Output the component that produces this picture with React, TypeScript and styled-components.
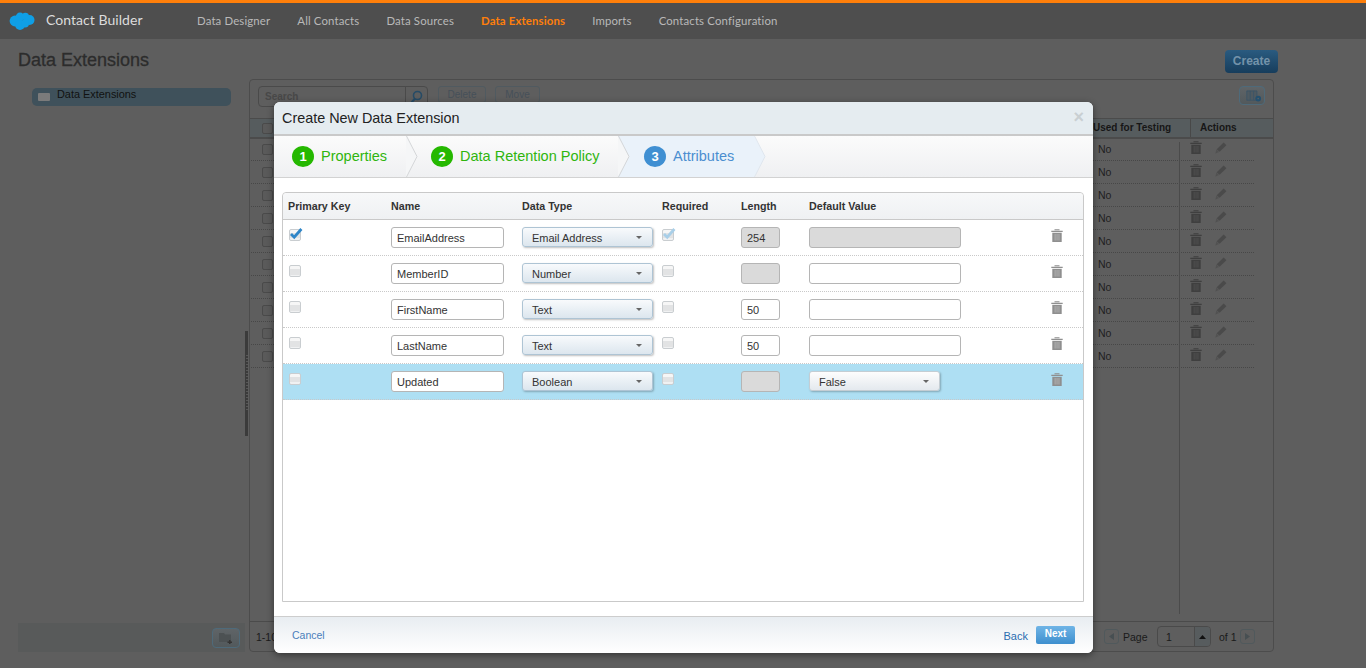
import React from "react";
import styled, { createGlobalStyle } from "styled-components";

const Global = createGlobalStyle`
  html, body { margin: 0; padding: 0; height: 100%; overflow: hidden; background: #5e5e5e; }
  body { font-family: "Liberation Sans", Arial, sans-serif; font-size: 11px; color: #222; }
  * { box-sizing: border-box; }
`;

const Page = styled.div`
  position: relative;
  width: 1366px;
  height: 668px;
  display: flex;
  flex-direction: column;
  background: #5e5e5e;
  overflow: hidden;
`;
const TopBar = styled.header`
  height: 39px;
  flex: none;
  border-top: 3px solid #ff7f0a;
  background: #4e4e4e;
  display: flex;
  align-items: center;
  padding-left: 9px;
`;
const Brand = styled.div`
  display: flex;
  align-items: center;
  gap: 11px;
  width: 188px;
  font: 400 14px Lato, sans-serif;
  letter-spacing: 0.05px;
  color: #dcdcdc;
  margin-top: -4px;
`;
const CloudSvg = styled.svg`
  margin-top: 4px;
  flex: none;
`;
const Nav = styled.nav`
  display: flex;
  gap: 27px;
  margin-top: -1px;
`;
const NavItem = styled.span<{ $on?: boolean }>`
  font: ${(p) => (p.$on ? 700 : 400)} 11.4px Lato, sans-serif;
  letter-spacing: 0.14px;
  color: ${(p) => (p.$on ? "#ff7f0a" : "#b9b9b9")};
`;
const Heading = styled.div`
  height: 40px;
  flex: none;
  display: flex;
  justify-content: space-between;
  align-items: center;
  padding: 0 88px 0 18px;
`;
const Title = styled.h1`
  margin: 2px 0 0;
  font-size: 18px;
  font-weight: 400;
  color: #2c2c2c;
  -webkit-text-stroke: 0.3px #2c2c2c;
`;
const CreateBtn = styled.div`
  width: 53px;
  height: 23px;
  margin-top: 4px;
  border-radius: 4px;
  background: linear-gradient(#2a5b80, #173d5c);
  color: #7493aa;
  font-size: 12px;
  font-weight: 700;
  line-height: 23px;
  text-align: center;
`;
const Body = styled.div`
  flex: 1;
  display: flex;
  padding: 0 92px 16px 18px;
`;
const Side = styled.aside`
  width: 227px;
  flex: none;
  display: flex;
  flex-direction: column;
  justify-content: space-between;
  padding-top: 9px;
`;
const TreeItem = styled.div`
  margin: 0 14px 0 14px;
  height: 18px;
  border-radius: 5px;
  background: #3f515b;
  display: flex;
  padding-left: 6px;
  gap: 7px;
  color: #111;
  font-size: 10.9px;
  line-height: 13px;
`;
const TreeIcon = styled.span`
  width: 12px;
  height: 8px;
  margin-top: 5px;
  background: #7b7b7b;
  border-radius: 1px;
`;
const SideFoot = styled.div`
  height: 29px;
  background: #585a5a;
  display: flex;
  justify-content: flex-end;
  align-items: center;
  padding-right: 5px;
`;
const IconBtn = styled.div`
  width: 28px;
  height: 20px;
  border-radius: 4px;
  border: 1px solid #4e6a7a;
  background: linear-gradient(#5f6467, #52595c);
  display: flex;
  align-items: center;
  justify-content: center;
`;
const Splitter = styled.div`
  position: relative;
  width: 3px;
  flex: none;
  margin: 252px 1px 0 0;
  height: 105px;
  background: #3b3b3b;
  &::after {
    content: "";
    position: absolute;
    left: 1px;
    top: 24px;
    width: 2px;
    height: 56px;
    background: repeating-linear-gradient(#585858 0 1px, transparent 1px 3px);
  }
`;
const Panel = styled.section`
  width: 1025px;
  flex: none;
  border: 1px solid #4c4c4c;
  border-radius: 4px;
  display: flex;
  flex-direction: column;
`;
const Tools = styled.div`
  height: 38px;
  flex: none;
  display: flex;
  align-items: flex-start;
  padding: 6px 8px 0 8px;
`;
const Search = styled.div`
  width: 148px;
  height: 21px;
  border: 1px solid #4a4a4a;
  border-radius: 4px 0 0 4px;
  color: #484848;
  font-size: 10px;
  line-height: 20px;
  padding-left: 6px;
  font-weight: 700;
`;
const SearchBtn = styled.div`
  width: 23px;
  height: 21px;
  margin-left: -1px;
  border: 1px solid #4a4a4a;
  border-radius: 0 4px 4px 0;
  display: flex;
  align-items: center;
  justify-content: center;
  margin-right: 10px;
`;
const ToolBtn = styled.div<{ $w: number }>`
  width: ${(p) => p.$w}px;
  height: 17px;
  margin-right: 9px;
  border: 1px solid #505a60;
  border-radius: 3px;
  color: #465059;
  font-size: 10px;
  line-height: 15px;
  text-align: center;
`;
const ColumnsBtn = styled(IconBtn)`
  margin-left: auto;
  width: 26px;
  height: 19px;
  padding-left: 3px;
`;
const GridHead = styled.div`
  height: 21px;
  flex: none;
  border-top: 1px solid #4b4b4b;
  border-bottom: 2px solid #4b4b4b;
  background: #565c5e;
  display: grid;
  grid-template-columns: 843px 97px 1fr;
  font-weight: 700;
  font-size: 10px;
  line-height: 18px;
  color: #161616;
`;
const HeadCheck = styled.span`
  padding: 4px 0 0 8px;
`;
const HeadCell = styled.span<{ $split?: boolean }>`
  padding-left: ${(p) => (p.$split ? 9 : 0)}px;
  border-left: ${(p) => (p.$split ? "1px solid #484848" : "none")};
`;
const GridBody = styled.div`
  flex: 1;
  position: relative;
  margin-top: -1px;
`;
const VLine = styled.div`
  position: absolute;
  left: 929px;
  top: 4px;
  bottom: 7px;
  width: 1px;
  background: #4b4b4b;
`;
const BgRow = styled.div`
  height: 23px;
  margin: 0 19px 0 1px;
  padding-left: 7px;
  border-bottom: 1px dotted #474747;
  display: grid;
  grid-template-columns: 840px 92px 25px 1fr;
  align-items: center;
  color: #1f1f1f;
  font-size: 10.5px;
`;
const BgCheck = styled.span`
  display: block;
  width: 11px;
  height: 11px;
  margin-left: 4px;
  border: 1px solid #4a4a4a;
  border-radius: 2px;
  background: #5a5a5a;
`;
const BgIcon = styled.span`
  display: block;
  line-height: 0;
  margin-top: -3px;
`;
const GridFoot = styled.div`
  height: 30px;
  flex: none;
  border-top: 1px solid #4b4b4b;
  display: flex;
  align-items: center;
  padding: 0 18px 0 6px;
  color: #1a1a1a;
  font-size: 10.5px;
`;
const Range = styled.span`
  margin-right: auto;
`;
const PagerBtn = styled.div`
  width: 15px;
  height: 15px;
  border: 1px solid #50595c;
  border-radius: 3px;
  display: flex;
  align-items: center;
  justify-content: center;
`;
const PageLabel = styled.span<{ $w: number; $pad: number }>`
  width: ${(p) => p.$w}px;
  padding-left: ${(p) => p.$pad}px;
`;
const PageInput = styled.div`
  width: 54px;
  height: 21px;
  border: 1px solid #4a4a4a;
  border-radius: 4px;
  display: flex;
  line-height: 20px;
  padding-left: 8px;
  margin-right: 8px;
  justify-content: space-between;
`;
const PageSpin = styled.span`
  width: 16px;
  border-left: 1px solid #4a4a4a;
  background: #575c5e;
  border-radius: 0 3px 3px 0;
  display: flex;
  align-items: center;
  justify-content: center;
`;
const Modal = styled.div`
  position: absolute;
  left: 274px;
  top: 102px;
  width: 819px;
  height: 551px;
  background: #fff;
  border-radius: 6px;
  box-shadow: 0 2px 7px rgba(0, 0, 0, 0.45);
  display: flex;
  flex-direction: column;
  overflow: hidden;
`;
const ModalHead = styled.div`
  height: 34px;
  flex: none;
  background: #e5ecf0;
  border-bottom: 2px solid #c9c9c9;
  display: flex;
  align-items: center;
  justify-content: space-between;
  padding: 0 9px 0 8px;
  font-size: 14.4px;
  color: #222;
`;
const Close = styled.span`
  font-size: 18px;
  font-weight: 700;
  color: #c9cfd2;
  margin-top: -2px;
`;
const Steps = styled.div`
  height: 42px;
  flex: none;
  display: flex;
  background: linear-gradient(#fbfbfb, #eff0f2);
  border-bottom: 1px solid #d2d2d2;
`;
const Step = styled.div<{ $w: number; $pad: number; $active?: boolean; $z: number }>`
  position: relative;
  z-index: ${(p) => p.$z};
  width: ${(p) => p.$w}px;
  flex: none;
  display: flex;
  align-items: center;
  gap: 7px;
  padding: 0 0 1px ${(p) => p.$pad}px;
  background: ${(p) => (p.$active ? "#eaf2fa" : "transparent")};
  color: ${(p) => (p.$active ? "#4a8ed0" : "#2fb50e")};
  font-size: 14.5px;
`;
const Badge = styled.span<{ $active?: boolean }>`
  width: 22px;
  height: 21px;
  border-radius: 50%;
  background: ${(p) => (p.$active ? "#3f8fd2" : "#25b800")};
  color: #fff;
  font-size: 13px;
  font-weight: 700;
  line-height: 21px;
  text-align: center;
`;
const Chevron = styled.svg`
  position: absolute;
  left: 100%;
  top: 0;
`;
const Content = styled.div`
  flex: 1;
  padding: 14px 9px 14px 8px;
`;
const Table = styled.div`
  height: 410px;
  border: 1px solid #c9c9c9;
  border-radius: 4px 4px 0 0;
`;
const cols = "108px 131px 140px 79px 68px 241px 1fr";
const TableHead = styled.div`
  height: 27px;
  background: linear-gradient(#f7f8f9, #eff1f3);
  border-bottom: 1px solid #c9c9c9;
  display: grid;
  grid-template-columns: ${cols};
  align-items: center;
  font-weight: 700;
  font-size: 10.7px;
  color: #333;
  border-radius: 4px 4px 0 0;
`;
const HCell = styled.span<{ $first?: boolean }>`
  padding-left: ${(p) => (p.$first ? 5 : 0)}px;
`;
const Row = styled.div<{ $hi?: boolean }>`
  height: 36px;
  border-bottom: 1px dotted #c9c9c9;
  background: ${(p) => (p.$hi ? "#aedff3" : "#fff")};
  display: grid;
  grid-template-columns: ${cols};
  align-items: start;
  padding-top: 6px;
`;
const Check = styled.span<{ $first?: boolean }>`
  position: relative;
  display: block;
  width: 12px;
  height: 12px;
  margin: 3px 0 0 ${(p) => (p.$first ? 6 : 0)}px;
  border: 1px solid #c9cdd0;
  border-radius: 2px;
  background: linear-gradient(#f6f6f6 0 30%, #e2e3e4 30% 85%, #f0f1f2 85%);
  svg { position: absolute; left: -1px; top: -3px; }
`;
const Input = styled.div<{ $w: number; $off?: boolean }>`
  width: ${(p) => p.$w}px;
  height: 21px;
  margin-top: 1px;
  border: 1px solid #b5b5b5;
  border-radius: 3px;
  background: ${(p) => (p.$off ? "#dadada" : "#fff")};
  padding-left: 5px;
  line-height: 20px;
  font-size: 11px;
  color: #333;
`;
const Select = styled.div<{ $w: number; $plain?: boolean }>`
  width: ${(p) => p.$w}px;
  height: 20px;
  margin-top: 1px;
  border: 1px solid ${(p) => (p.$plain ? "#c4cdd3" : "#aec4d4")};
  border-radius: 3px;
  background: ${(p) => (p.$plain ? "linear-gradient(#fdfdfd, #e4e9ee)" : "linear-gradient(#f8fafc, #dce6ee)")};
  box-shadow: 1px 1px 2px rgba(0, 0, 0, 0.25);
  padding: 1px 10px 0 9px;
  display: flex;
  align-items: center;
  justify-content: space-between;
  color: #333;
  font-size: 11px;
`;
const Caret = styled.span`
  width: 0;
  height: 0;
  border-left: 3px solid transparent;
  border-right: 3px solid transparent;
  border-top: 3px solid #666;
`;
const TrashSlot = styled.span`
  margin: 3px 0 0 1px;
  display: block;
  line-height: 0;
`;
const ModalFoot = styled.div`
  height: 37px;
  flex: none;
  border-top: 1px solid #cdcdcd;
  background: linear-gradient(#e8edf1, #ffffff);
  display: flex;
  align-items: center;
  padding: 0 18px;
`;
const Cancel = styled.span`
  color: #4a7ebb;
  font-size: 10.5px;
  margin-right: auto;
`;
const Back = styled.span`
  color: #2a6db0;
  font-size: 11px;
  margin: 2px 8px 0 0;
`;
const NextBtn = styled.div`
  width: 39px;
  height: 18px;
  border-radius: 2px;
  background: linear-gradient(#6fb4e6, #3e8fce);
  color: #fff;
  font-size: 10px;
  font-weight: 700;
  text-align: center;
  line-height: 15px;
`;

const Cloud = () => (
  <CloudSvg width="26" height="20" viewBox="0 0 26 20" aria-hidden>
    <g fill="#0f9fe6">
      <circle cx="11" cy="6" r="4.4" />
      <circle cx="16.4" cy="5.4" r="3.6" />
      <circle cx="20.6" cy="9" r="4.9" />
      <circle cx="6" cy="10" r="5.4" />
      <circle cx="11" cy="14" r="4.9" />
      <circle cx="16" cy="12.4" r="4" />
    </g>
  </CloudSvg>
);

const Trash = ({ c = "#8f8f8f", d = "#aeaeae" }: { c?: string; d?: string }) => (
  <svg width="12" height="13" viewBox="0 0 12 13" aria-hidden>
    <path d="M0.3 1.7h11.400v1.300H0.300zM3.500 0.300h5v1h-5z" fill={c} />
    <path d="M1.300 3.800h9.400V13H1.300z" fill={c} />
    <path d="M3.600 5h1.100v6.600H3.600zM5.500 5h1.100v6.600H5.500zM7.400 5h1.100v6.600H7.400z" fill={d} />
  </svg>
);
const Pencil = () => (
  <svg width="12" height="12" viewBox="0 0 12 12" aria-hidden>
    <path d="M8.600 0.600l2.800 2.600-6.900 6.600-2.800-2.600z" fill="#4a4a4a" />
    <path d="M1.400 7.400l2.600 2.600L0.400 11.600z" fill="#525252" />
  </svg>
);
const Tick = ({ c }: { c: string }) => (
  <svg width="14" height="13" viewBox="0 0 14 13" aria-hidden>
    <path d="M2 7l3.200 3.200L12.400 2" fill="none" stroke={c} strokeWidth="2.800" />
  </svg>
);

const rows = [
  { name: "EmailAddress", type: "Email Address", pk: true, req: true, len: "254", lenOff: true, def: "off" },
  { name: "MemberID", type: "Number", lenOff: true, len: "", def: "input" },
  { name: "FirstName", type: "Text", len: "50", def: "input" },
  { name: "LastName", type: "Text", len: "50", def: "input" },
  { name: "Updated", type: "Boolean", lenOff: true, len: "", def: "select", hi: true },
];

const StepChevron = ({ fill, stroke }: { fill: string; stroke: string }) => (
  <Chevron width="12" height="41" viewBox="0 0 12 41" aria-hidden>
    <path d="M0 0L11 20.500L0 41z" fill={fill} />
    <path d="M0.500 0L11 20.500L0.500 41" fill="none" stroke={stroke} />
  </Chevron>
);

export default function App() {
  return (
    <Page>
      <Global />
      <TopBar>
        <Brand>
          <Cloud />
          Contact Builder
        </Brand>
        <Nav>
          <NavItem>Data Designer</NavItem>
          <NavItem>All Contacts</NavItem>
          <NavItem>Data Sources</NavItem>
          <NavItem $on>Data Extensions</NavItem>
          <NavItem>Imports</NavItem>
          <NavItem>Contacts Configuration</NavItem>
        </Nav>
      </TopBar>
      <Heading>
        <Title>Data Extensions</Title>
        <CreateBtn>Create</CreateBtn>
      </Heading>
      <Body>
        <Side>
          <TreeItem>
            <TreeIcon />
            Data Extensions
          </TreeItem>
          <SideFoot>
            <IconBtn>
              <svg width="16" height="13" viewBox="0 0 16 13" aria-hidden>
                <path d="M1 2h5l1 1.500h6V11H1z" fill="#4c5153" />
                <path d="M11 9h1.500v1.500H14V12h-1.500v1H11v-1H9.500v-1.500H11z" fill="#333" />
              </svg>
            </IconBtn>
          </SideFoot>
        </Side>
        <Splitter />
        <Panel>
          <Tools>
            <Search>Search</Search>
            <SearchBtn>
              <svg width="13" height="14" viewBox="0 0 13 14" aria-hidden>
                <circle cx="7.500" cy="5.500" r="4" fill="none" stroke="#264b66" strokeWidth="1.600" />
                <path d="M5 8.500L1.500 12.500" stroke="#264b66" strokeWidth="2" />
              </svg>
            </SearchBtn>
            <ToolBtn $w={48}>Delete</ToolBtn>
            <ToolBtn $w={45}>Move</ToolBtn>
            <ColumnsBtn>
              <svg width="16" height="12" viewBox="0 0 19 14" aria-hidden>
                <path d="M1 1h12v11H1z" fill="#4f5a61" />
                <path d="M1 1h12v11H1zM5 1v11M9 1v11" fill="none" stroke="#3a5568" strokeWidth="1" />
                <circle cx="14.500" cy="10" r="3.400" fill="#24506f" />
                <circle cx="14.500" cy="10" r="1" fill="#566064" />
              </svg>
            </ColumnsBtn>
          </Tools>
          <GridHead>
            <HeadCheck>
              <BgCheck />
            </HeadCheck>
            <HeadCell>Used for Testing</HeadCell>
            <HeadCell $split>Actions</HeadCell>
          </GridHead>
          <GridBody>
            <VLine />
            {Array.from({ length: 10 }).map((_, i) => (
              <BgRow key={i}>
                <BgCheck />
                <span>No</span>
                <BgIcon>
                  <Trash c="#3f3f3f" d="#4e4e4e" />
                </BgIcon>
                <BgIcon>
                  <Pencil />
                </BgIcon>
              </BgRow>
            ))}
          </GridBody>
          <GridFoot>
            <Range>1-10</Range>
            <PagerBtn>
              <svg width="5" height="7" viewBox="0 0 5 7" aria-hidden><path d="M5 0v7L0 3.500z" fill="#474f52" /></svg>
            </PagerBtn>
            <PageLabel $w={38} $pad={4}>Page</PageLabel>
            <PageInput>
              1
              <PageSpin>
                <svg width="7" height="4" viewBox="0 0 7 4" aria-hidden><path d="M0 4l3.500-4L7 4z" fill="#111" /></svg>
              </PageSpin>
            </PageInput>
            <PageLabel $w={21} $pad={0}>of 1</PageLabel>
            <PagerBtn>
              <svg width="5" height="7" viewBox="0 0 5 7" aria-hidden><path d="M0 0v7l5-3.500z" fill="#474f52" /></svg>
            </PagerBtn>
          </GridFoot>
        </Panel>
      </Body>

      <Modal>
        <ModalHead>
          Create New Data Extension
          <Close>×</Close>
        </ModalHead>
        <Steps>
          <Step $w={132} $pad={18} $z={3}>
            <Badge>1</Badge>Properties
            <StepChevron fill="#f5f6f7" stroke="#d4d6d8" />
          </Step>
          <Step $w={212} $pad={25} $z={2}>
            <Badge>2</Badge>Data Retention Policy
            <StepChevron fill="#f5f6f7" stroke="#d4d6d8" />
          </Step>
          <Step $w={136} $pad={26} $z={1} $active>
            <Badge $active>3</Badge>Attributes
            <StepChevron fill="#eaf2fa" stroke="#dfe6ee" />
          </Step>
        </Steps>
        <Content>
          <Table>
            <TableHead>
              <HCell $first>Primary Key</HCell>
              <HCell>Name</HCell>
              <HCell>Data Type</HCell>
              <HCell>Required</HCell>
              <HCell>Length</HCell>
              <HCell>Default Value</HCell>
            </TableHead>
            {rows.map((r) => (
              <Row key={r.name} $hi={r.hi}>
                <Check $first>{r.pk && <Tick c="#2f86c8" />}</Check>
                <Input $w={113}>{r.name}</Input>
                <Select $w={131}>
                  {r.type}
                  <Caret />
                </Select>
                <Check>{r.req && <Tick c="#a9cfe8" />}</Check>
                <Input $w={39} $off={r.lenOff}>{r.len}</Input>
                {r.def === "select" ? (
                  <Select $w={131} $plain>
                    False
                    <Caret />
                  </Select>
                ) : (
                  <Input $w={152} $off={r.def === "off"} />
                )}
                <TrashSlot>
                  <Trash />
                </TrashSlot>
              </Row>
            ))}
          </Table>
        </Content>
        <ModalFoot>
          <Cancel>Cancel</Cancel>
          <Back>Back</Back>
          <NextBtn>Next</NextBtn>
        </ModalFoot>
      </Modal>
    </Page>
  );
}
